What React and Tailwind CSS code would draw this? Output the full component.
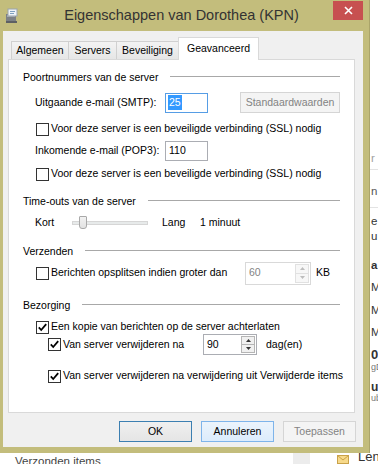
import React from "react";

const Check = ({ checked }) => (
  <span className="w-[13px] h-[13px] shrink-0 border border-[#333333] bg-white flex items-center justify-center">
    {checked && (
      <svg width="11" height="11" viewBox="0 0 11 11">
        <path d="M1.8 5.4 L4.2 8 L9.2 2.2" fill="none" stroke="#000" strokeWidth="1.8" />
      </svg>
    )}
  </span>
);

const GroupTitle = ({ title }) => (
  <div className="flex items-center h-[16px] shrink-0">
    <span>{title}</span>
    <span className="flex-1 h-px bg-[#a8a8a8] ml-[12px] mb-[3px]" />
  </div>
);

const Spin = ({ value, disabled, className }) => (
  <div
    className={
      "flex bg-white border shrink-0 " +
      (disabled ? "border-[#d9d9d9] text-[#838383] " : "border-[#abadb3] text-black ") +
      className
    }>
    <span className="flex-1 flex items-center pl-[3px]">{value}</span>
    <div
      className={
        "w-[14px] flex flex-col my-px mr-px border " +
        (disabled ? "border-[#e1e1e1] bg-[#f7f7f7]" : "border-[#b5b5b5] bg-[#f0f0f0]")
      }>
      <div
        className={
          "flex-1 flex items-center justify-center border-b " +
          (disabled ? "border-[#e1e1e1]" : "border-[#b5b5b5]")
        }>
        <svg width="5" height="3" viewBox="0 0 5 3">
          <path d="M0 3 L2.5 0 L5 3 Z" fill={disabled ? "#bdbdbd" : "#333"} />
        </svg>
      </div>
      <div className="flex-1 flex items-center justify-center">
        <svg width="5" height="3" viewBox="0 0 5 3">
          <path d="M0 0 L2.5 3 L5 0 Z" fill={disabled ? "#bdbdbd" : "#333"} />
        </svg>
      </div>
    </div>
  </div>
);

const Tab = ({ label, active, className }) =>
  active ? (
    <div
      className={
        "h-[23px] -mb-px relative z-10 bg-white border border-b-0 border-[#d9d9d9] flex items-center justify-center " +
        className
      }>
      {label}
    </div>
  ) : (
    <div
      className={
        "h-[18px] bg-gradient-to-b from-[#f3f3f3] to-[#e6e6e6] border border-b-0 border-[#d0d0d0] flex items-center justify-center " +
        className
      }>
      {label}
    </div>
  );

const TitleIcon = () => (
  <svg width="14" height="15" viewBox="0 0 14 15">
    <rect x="1" y="6" width="10" height="8" fill="#7d8185" />
    <rect x="2" y="7" width="8" height="2" fill="#a9adb1" />
    <rect x="3" y="1" width="9" height="7" fill="#eef3f7" stroke="#9aa3ab" strokeWidth="1" />
    <path d="M5 3.5 H10 M5 5.5 H9" stroke="#7fa0c0" strokeWidth="1" />
    <rect x="1" y="13" width="11" height="2" fill="#5d6064" />
  </svg>
);

const Envelope = () => (
  <svg width="12" height="9" viewBox="0 0 12 9">
    <rect x="0.5" y="0.5" width="11" height="8" fill="#f7d98a" stroke="#c9a24a" />
    <path d="M0.5 0.5 L6 5 L11.5 0.5" fill="none" stroke="#c9a24a" />
  </svg>
);

export default function App() {
  return (
    <div className="relative w-[378px] h-[464px] overflow-hidden bg-white font-['Liberation_Sans',Arial,sans-serif] text-[10.5px] text-black whitespace-nowrap">
      {/* mail app behind the dialog */}
      <div className="flex h-full">
        <div className="w-[293px] shrink-0 pt-[453px] pl-[15px]">
          <div className="text-[11.5px] leading-[17px] text-[#444]">Verzonden items</div>
        </div>
        <div className="w-[17px] shrink-0 bg-[#ececec]" />
        <div className="flex-1 flex flex-col text-[11.5px] text-[#333]">
          <div className="h-[150px] shrink-0" />
          <div className="h-[16px] leading-[16px] pl-[61px] text-[#a0a0a0]">r</div>
          <div className="h-[4px] border-b border-[#e3e3e3]" />
          <div className="h-[14px]" />
          <div className="h-[16px] leading-[16px] pl-[61px] text-[#555]">n</div>
          <div className="h-[9px] border-b border-[#e3e3e3]" />
          <div className="h-[5px]" />
          <div className="h-[16px] leading-[16px] pl-[61px]">e</div>
          <div className="h-[15px] leading-[15px] pl-[61px]">u</div>
          <div className="h-[13px]" />
          <div className="h-[16px] leading-[16px] pl-[61px] font-bold">a</div>
          <div className="h-[7px]" />
          <div className="h-[16px] leading-[16px] pl-[61px]">M</div>
          <div className="h-[7px]" />
          <div className="h-[16px] leading-[16px] pl-[61px]">M</div>
          <div className="h-[6px]" />
          <div className="h-[16px] leading-[16px] pl-[61px]">M</div>
          <div className="h-[7px]" />
          <div className="h-[16px] leading-[16px] pl-[61px] text-[13px] font-bold">0(</div>
          <div className="h-[9px] leading-[9px] pl-[61px] text-[9px] text-[#777]">gD</div>
          <div className="h-[9px]" />
          <div className="h-[13px] leading-[13px] pl-[61px] text-[12px] font-bold">u</div>
          <div className="h-[9px] leading-[9px] pl-[61px] text-[9px] text-[#777]">ub</div>
          <div className="h-[49px]" />
          <div className="h-[14px] flex items-end pl-[27px]">
            <Envelope />
            <span className="ml-[9px] text-[13px] leading-[14px] text-[#333]">Len</span>
          </div>
        </div>
      </div>

      {/* dialog window */}
      <div className="absolute left-0 top-0 w-[370px] h-[453px] bg-[#c3bd7c] border-r border-[#aaa46a] flex flex-col">
        <div className="h-[31px] flex items-start shrink-0">
          <div className="w-[40px] pl-[5px] pt-[8px]">
            <TitleIcon />
          </div>
          <div className="flex-1 text-center text-[14.5px] leading-[18px] pt-[6px] pr-[6px] text-[#333333]">
            Eigenschappen van Dorothea (KPN)
          </div>
          <div className="w-[40px] flex justify-end pr-[6px] pt-[1px]">
            <div className="w-[30px] h-[19px] bg-[#c75050] flex items-center justify-center">
              <svg width="9" height="9" viewBox="0 0 9 9">
                <path d="M1 1 L8 8 M8 1 L1 8" stroke="#fff" strokeWidth="1.6" />
              </svg>
            </div>
          </div>
        </div>

        <div className="ml-[3px] w-[360px] h-[416px] bg-[#f0f0f0] flex flex-col">
          <div className="flex items-end h-[22px] mt-[6px] pl-[8px] shrink-0">
            <Tab label="Algemeen" className="w-[58px]" />
            <Tab label="Servers" className="w-[49px] -ml-px" />
            <Tab label="Beveiliging" className="w-[63px] -ml-px" />
            <Tab label="Geavanceerd" active className="w-[81px] -ml-px" />
          </div>

          <div className="ml-[5px] w-[347px] h-[354px] shrink-0 bg-white border border-[#d9d9d9] flex flex-col pl-[14px] pr-[14px]">
            <div className="mt-[10px]">
              <GroupTitle title="Poortnummers van de server" />
            </div>

            <div className="flex items-center h-[21px] mt-[6px] shrink-0">
              <span className="w-[130px] ml-[12px]">Uitgaande e-mail (SMTP):</span>
              <div className="w-[43px] h-[20px] border border-[#569de5] bg-white flex items-center pl-[2px]">
                <span className="bg-[#3399ff] text-white leading-[15px] px-px">25</span>
              </div>
              <div className="ml-auto w-[100px] h-[21px] border border-[#d5d5d5] bg-[#f4f4f4] text-[#838383] flex items-center justify-center">
                Standaardwaarden
              </div>
            </div>

            <div className="flex items-center h-[16px] mt-[8px] ml-[13px] shrink-0">
              <Check />
              <span className="ml-[2px]">Voor deze server is een beveiligde verbinding (SSL) nodig</span>
            </div>

            <div className="flex items-center h-[20px] mt-[4px] shrink-0">
              <span className="w-[130px] ml-[12px]">Inkomende e-mail (POP3):</span>
              <div className="w-[43px] h-[20px] border border-[#abadb3] bg-white flex items-center pl-[3px]">
                110
              </div>
            </div>

            <div className="flex items-center h-[16px] mt-[5px] ml-[13px] shrink-0">
              <Check />
              <span className="ml-[2px]">Voor deze server is een beveiligde verbinding (SSL) nodig</span>
            </div>

            <div className="mt-[12px]">
              <GroupTitle title="Time-outs van de server" />
            </div>

            <div className="flex items-center h-[18px] mt-[4px] ml-[12px] shrink-0">
              <span className="w-[37px]">Kort</span>
              <div className="relative w-[76px] h-[13px] flex items-center">
                <div className="w-full h-[4px] bg-[#e7eaea] border border-[#d6d6d6]" />
                <div className="absolute left-[7px] -top-[1px] w-[8px] h-[13px] bg-gradient-to-b from-[#f2f2f2] to-[#e2e2e2] border border-[#a9a9a9] rounded-t-[1px] rounded-b-[3px]" />
              </div>
              <span className="ml-[14px] w-[38px]">Lang</span>
              <span>1 minuut</span>
            </div>

            <div className="mt-[12px]">
              <GroupTitle title="Verzenden" />
            </div>

            <div className="flex items-center h-[24px] mt-[1px] ml-[13px] shrink-0">
              <Check />
              <span className="ml-[2px] w-[194px]">Berichten opsplitsen indien groter dan</span>
              <Spin value="60" disabled className="w-[66px] h-[23px]" />
              <span className="ml-[5px]">KB</span>
            </div>

            <div className="mt-[13px]">
              <GroupTitle title="Bezorging" />
            </div>

            <div className="flex items-center h-[14px] mt-[6px] ml-[13px] shrink-0">
              <Check checked />
              <span className="ml-[2px]">Een kopie van berichten op de server achterlaten</span>
            </div>

            <div className="flex items-center h-[21px] ml-[25px] shrink-0">
              <Check checked />
              <span className="ml-[2px] w-[140px]">Van server verwijderen na</span>
              <Spin value="90" className="w-[54px] h-[21px]" />
              <span className="ml-[9px]">dag(en)</span>
            </div>

            <div className="flex items-center h-[16px] mt-[13px] ml-[25px] shrink-0">
              <Check checked />
              <span className="ml-[2px]">Van server verwijderen na verwijdering uit Verwijderde items</span>
            </div>
          </div>

          <div className="flex justify-end gap-[9px] mt-[8px] pr-[7px] h-[21px] shrink-0">
            <div className="w-[73px] border border-[#3c7fb1] bg-gradient-to-b from-[#f0f0f0] to-[#e5e5e5] flex items-center justify-center">
              OK
            </div>
            <div className="w-[73px] border border-[#7eb4ea] bg-gradient-to-b from-[#ecf4fc] to-[#dcecfc] flex items-center justify-center">
              Annuleren
            </div>
            <div className="w-[73px] border border-[#d5d5d5] bg-[#f4f4f4] text-[#838383] flex items-center justify-center">
              Toepassen
            </div>
          </div>
        </div>
      </div>
    </div>
  );
}
